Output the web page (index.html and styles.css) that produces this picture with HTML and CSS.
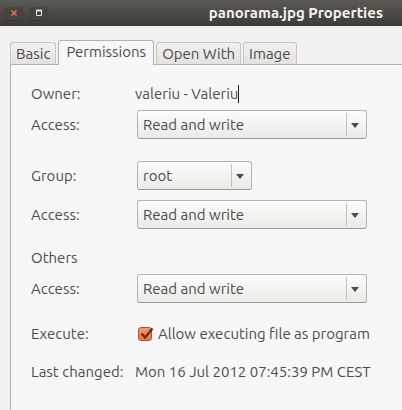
FILE: index.html
```html
<!DOCTYPE html>
<html lang="en">

<head>
    <meta charset="UTF-8">
    <meta name="viewport" content="width=device-width, initial-scale=1.0">
    <title>panorama.jpg Properties</title>
    <link rel="stylesheet" href="styles.css">
</head>

<body>
    <header class="titlebar">
        <button class="window-button" type="button" aria-label="Close">
            <svg width="8" height="8" viewBox="0 0 8 8"><path d="M1.5 1.5l5 5M6.5 1.5l-5 5" stroke="#e0705c" stroke-width="1.6" fill="none"/></svg>
        </button>
        <button class="window-button" type="button" aria-label="Maximize">
            <svg width="8" height="8" viewBox="0 0 8 8"><path d="M1.5 1v5.5h5V1" stroke="#e4e2dc" fill="none"/><path d="M1 1.5h6" stroke="#e4e2dc" stroke-width="2"/></svg>
        </button>
        <h1 class="window-title">panorama.jpg Properties</h1>
    </header>

    <main class="window">
        <nav class="tabs">
            <button class="tab" type="button">Basic</button>
            <button class="tab active" type="button">Permissions</button>
            <button class="tab" type="button">Open With</button>
            <button class="tab" type="button">Image</button>
        </nav>

        <form class="panel">
            <div class="group">
                <span>Owner:</span>
                <span class="owner">valeriu - Valeriu</span>
                <label for="owner-access">Access:</label>
                <span class="combo">
                    <select id="owner-access">
                        <option>Read and write</option>
                        <option>Read-only</option>
                    </select>
                </span>
            </div>

            <div class="group group-owner">
                <label for="group-name">Group:</label>
                <span class="combo combo-small">
                    <select id="group-name">
                        <option>root</option>
                    </select>
                </span>
                <label for="group-access">Access:</label>
                <span class="combo">
                    <select id="group-access">
                        <option>Read and write</option>
                        <option>Read-only</option>
                    </select>
                </span>
            </div>

            <div class="group">
                <span class="heading">Others</span>
                <label for="others-access">Access:</label>
                <span class="combo">
                    <select id="others-access">
                        <option>Read and write</option>
                        <option>Read-only</option>
                    </select>
                </span>
            </div>

            <div class="group details">
                <span>Execute:</span>
                <label class="check">
                    <input type="checkbox" checked>
                    <svg class="tick" width="16" height="16" viewBox="0 0 16 16"><path d="M3.5 7.5l3.5 4L14.5 2.5" stroke="#6b2a17" stroke-width="2.2" fill="none"/></svg>
                    Allow executing file as program
                </label>
                <span>Last changed:</span>
                <span>Mon 16 Jul 2012 07:45:39 PM CEST</span>
            </div>
        </form>
    </main>
</body>

</html>
```
FILE: styles.css
```css
body {
    display: flex;
    flex-direction: column;
    min-height: 100vh;
    margin: 0;
    font-family: Ubuntu, "Noto Sans", sans-serif;
    font-size: 15px;
    line-height: 18px;
    color: #4c4c4c;
    background-color: #f2f1f0;
}

button,
select {
    margin: 0;
    font: inherit;
    color: inherit;
}

.titlebar {
    display: flex;
    align-items: center;
    gap: 6px;
    height: 26px;
    padding: 0 19px 0 4px;
    background: linear-gradient(#5a5954, #3c3b37);
}

.window-button {
    display: flex;
    align-items: center;
    justify-content: center;
    width: 19px;
    height: 13px;
    padding: 0;
    border: 0;
    border-radius: 4px;
    background-color: #454440;
    box-shadow: 0 1px 1px #35342f;
}

.window-title {
    flex: 1;
    margin: 0;
    font-size: 15px;
    line-height: 18px;
    font-weight: bold;
    text-align: right;
    white-space: nowrap;
    color: #f4f2ee;
}

.window {
    display: flex;
    flex: 1;
    flex-direction: column;
    padding: 14px 0 0 10px;
}

.tabs {
    display: flex;
    align-items: flex-end;
    gap: 2px;
}

.tab {
    height: 22px;
    padding: 0 5px;
    border: 1px solid #c8c5c2;
    border-bottom: 0;
    border-radius: 3px 3px 0 0;
    background: linear-gradient(#f1f0ef, #e3e2e0);
    white-space: nowrap;
}

.tab.active {
    z-index: 1;
    height: 25px;
    margin-bottom: -1px;
    padding: 0 7px 2px;
    border-color: #b5b2ae;
    background: #f8f7f7;
}

.panel {
    display: flex;
    flex: 1;
    flex-direction: column;
    gap: 20px;
    padding: 20px;
    border-top: 1px solid #b5b2ae;
    border-left: 1px solid #b5b2ae;
    background-color: #f8f7f7;
}

.group {
    display: grid;
    grid-template-columns: 104px 1fr;
    align-items: center;
    row-gap: 7px;
    white-space: nowrap;
}

.group-owner {
    row-gap: 10px;
    padding-top: 2px;
}

.details {
    row-gap: 16px;
    grid-auto-rows: 22px;
}

.heading {
    grid-column: 1 / -1;
}

.owner {
    justify-self: start;
    border-right: 1px solid #222;
}

.combo {
    position: relative;
    max-width: 230px;
    margin-left: 2px;
}

.combo-small {
    max-width: 115px;
}

.combo select {
    display: block;
    width: 100%;
    height: 29px;
    padding: 0 30px 0 5px;
    appearance: none;
    border: 1px solid #b5b3b0;
    border-bottom-color: #999794;
    border-radius: 3px;
    background: linear-gradient(#fcfcfb, #f4f4f2 45%, #eaeae7);
}

/* divider and arrow on top of the select */
.combo::before {
    content: "";
    position: absolute;
    top: 3px;
    right: 20px;
    height: 23px;
    border-left: 1px solid #c4c2bf;
    pointer-events: none;
}

.combo::after {
    content: "";
    position: absolute;
    top: 13px;
    right: 8px;
    border: 4px solid transparent;
    border-top: 5px solid #4c4c4c;
    border-bottom: 0;
    pointer-events: none;
}

.check {
    position: relative;
    display: flex;
    align-items: center;
    gap: 6px;
    padding-left: 3px;
}

.check input {
    width: 14px;
    height: 14px;
    margin: 0;
    appearance: none;
    border: 1px solid #a5563a;
    border-radius: 3px;
    background: linear-gradient(#f39a70, #e9764a);
}

.tick {
    position: absolute;
    top: 1px;
    left: 3px;
    visibility: hidden;
    pointer-events: none;
}

.check input:checked + .tick {
    visibility: visible;
}
```
